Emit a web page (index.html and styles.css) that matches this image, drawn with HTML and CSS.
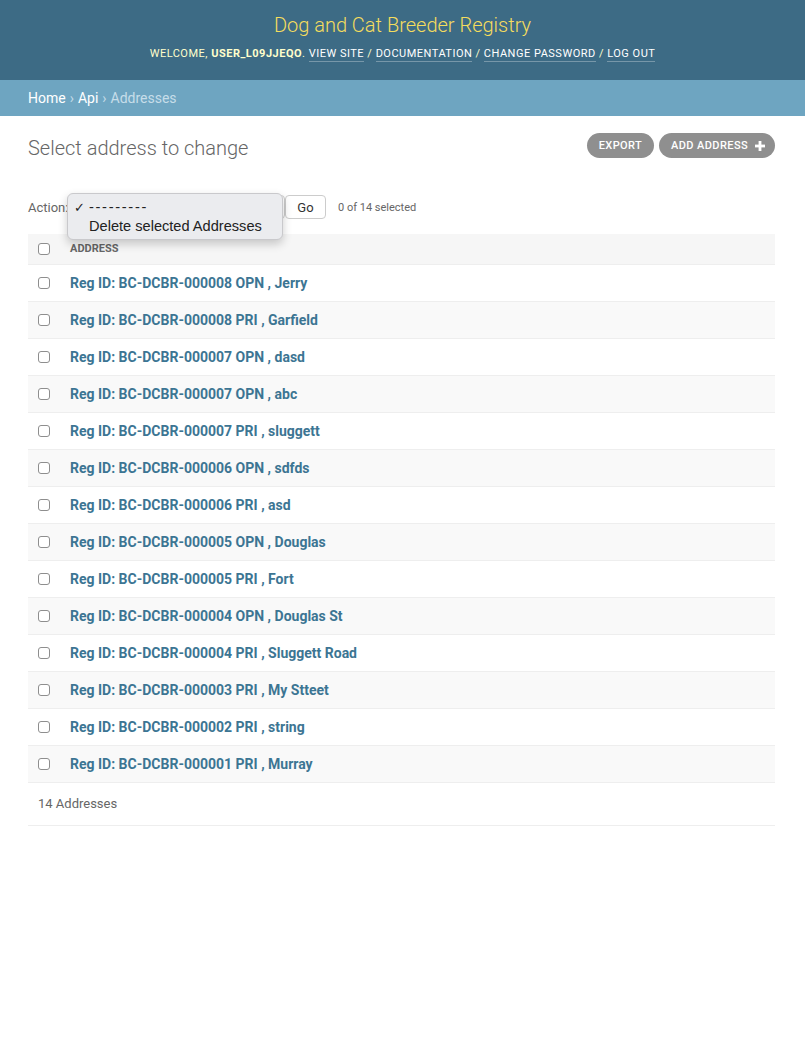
FILE: index.html
```html
<!DOCTYPE html>
<html lang="en">
<head>
<meta charset="utf-8">
<title>Select address to change</title>
<link rel="stylesheet" href="styles.css">
</head>
<body>
<header class="header">
  <h1 class="site-name">Dog and Cat Breeder Registry</h1>
  <div class="user-tools">
    Welcome, <strong>user_l09jjeqo</strong>.
    <a href="#">View site</a> /
    <a href="#">Documentation</a> /
    <a href="#">Change password</a> /
    <a href="#">Log out</a>
  </div>
</header>
<nav class="breadcrumbs">
  <a href="#">Home</a> › <a href="#">Api</a> › <span class="current">Addresses</span>
</nav>
<main class="content">
  <div class="title-row">
    <h1 class="page-title">Select address to change</h1>
    <div class="object-tools">
      <a href="#" class="tool-btn">Export</a>
      <a href="#" class="tool-btn">Add address
        <svg class="plus" width="10" height="10" viewBox="0 0 10 10"><rect x="3.6" y="0" width="2.8" height="10" fill="#fff"/><rect x="0" y="3.6" width="10" height="2.8" fill="#fff"/></svg>
      </a>
    </div>
  </div>
  <div class="actions">
    <span class="action-label">Action:</span>
    <div class="select-wrap">
      <div class="select-box"></div>
      <div class="popup">
        <div class="popup-item"><span class="check">✓</span><span class="dashes">---------</span></div>
        <div class="popup-item">Delete selected Addresses</div>
      </div>
    </div>
    <button class="go-btn">Go</button>
    <span class="counter">0 of 14 selected</span>
  </div>
  <table class="result-list">
    <thead>
      <tr><th class="cb-cell"><input type="checkbox" class="cb"></th><th class="col-head">Address</th></tr>
    </thead>
    <tbody>
      <tr><td class="cb-cell"><input type="checkbox" class="cb"></td><td><a href="#">Reg ID: BC-DCBR-000008 OPN , Jerry</a></td></tr>
      <tr><td class="cb-cell"><input type="checkbox" class="cb"></td><td><a href="#">Reg ID: BC-DCBR-000008 PRI , Garfield</a></td></tr>
      <tr><td class="cb-cell"><input type="checkbox" class="cb"></td><td><a href="#">Reg ID: BC-DCBR-000007 OPN , dasd</a></td></tr>
      <tr><td class="cb-cell"><input type="checkbox" class="cb"></td><td><a href="#">Reg ID: BC-DCBR-000007 OPN , abc</a></td></tr>
      <tr><td class="cb-cell"><input type="checkbox" class="cb"></td><td><a href="#">Reg ID: BC-DCBR-000007 PRI , sluggett</a></td></tr>
      <tr><td class="cb-cell"><input type="checkbox" class="cb"></td><td><a href="#">Reg ID: BC-DCBR-000006 OPN , sdfds</a></td></tr>
      <tr><td class="cb-cell"><input type="checkbox" class="cb"></td><td><a href="#">Reg ID: BC-DCBR-000006 PRI , asd</a></td></tr>
      <tr><td class="cb-cell"><input type="checkbox" class="cb"></td><td><a href="#">Reg ID: BC-DCBR-000005 OPN , Douglas</a></td></tr>
      <tr><td class="cb-cell"><input type="checkbox" class="cb"></td><td><a href="#">Reg ID: BC-DCBR-000005 PRI , Fort</a></td></tr>
      <tr><td class="cb-cell"><input type="checkbox" class="cb"></td><td><a href="#">Reg ID: BC-DCBR-000004 OPN , Douglas St</a></td></tr>
      <tr><td class="cb-cell"><input type="checkbox" class="cb"></td><td><a href="#">Reg ID: BC-DCBR-000004 PRI , Sluggett Road</a></td></tr>
      <tr><td class="cb-cell"><input type="checkbox" class="cb"></td><td><a href="#">Reg ID: BC-DCBR-000003 PRI , My Stteet</a></td></tr>
      <tr><td class="cb-cell"><input type="checkbox" class="cb"></td><td><a href="#">Reg ID: BC-DCBR-000002 PRI , string</a></td></tr>
      <tr><td class="cb-cell"><input type="checkbox" class="cb"></td><td><a href="#">Reg ID: BC-DCBR-000001 PRI , Murray</a></td></tr>
    </tbody>
  </table>
  <p class="paginator">14 Addresses</p>
</main>
</body>
</html>
```

FILE: styles.css
```css
* { box-sizing: border-box; }
html, body { margin: 0; padding: 0; }
body {
  font-family: Roboto, "Liberation Sans", Arial, sans-serif;
  color: #333;
  background: #fff;
  font-size: 14px;
}
a { text-decoration: none; }

.header {
  background: #3d6b85;
  height: 80px;
  display: flex;
  flex-direction: column;
  align-items: center;
  padding-top: 13px;
}
.site-name {
  margin: 0;
  font-size: 20px;
  font-weight: 300;
  line-height: 24px;
  color: #f5dd5d;
}
.user-tools {
  margin-top: 9px;
  font-size: 11px;
  letter-spacing: 0.5px;
  text-transform: uppercase;
  color: #ffffcc;
  line-height: 16px;
}
.user-tools strong { font-weight: 700; }
.user-tools a {
  color: #fff;
  border-bottom: 1px solid rgba(255,255,255,0.3);
  padding-bottom: 1px;
}

.breadcrumbs {
  background: #6ea5c1;
  height: 36px;
  padding: 0 28px;
  display: flex;
  align-items: center;
  gap: 4px;
  color: #c4dce8;
  font-size: 14px;
}
.breadcrumbs a { color: #fff; }
.breadcrumbs .current { color: #c6dde9; }

.content { padding: 17px 30px 0 28px; }
.title-row {
  display: flex;
  justify-content: space-between;
  align-items: flex-start;
}
.page-title {
  margin: 3px 0 0;
  font-size: 20px;
  font-weight: 300;
  line-height: 24px;
  color: #666;
}
.object-tools { display: flex; gap: 5px; }
.tool-btn {
  display: flex;
  align-items: center;
  gap: 7px;
  height: 25px;
  padding: 0 10px 0 12px;
  border-radius: 13px;
  background: #8f8f8f;
  color: #fff;
  font-size: 11px;
  font-weight: 500;
  letter-spacing: 0.4px;
  text-transform: uppercase;
}
.tool-btn:first-child { padding: 0 12px; }

.actions {
  display: flex;
  align-items: center;
  height: 24px;
  margin-top: 35px;
}
.action-label { font-size: 13px; color: #666; width: 42px; }
.select-wrap { position: relative; width: 215px; height: 24px; }
.select-box {
  height: 24px;
  border: 1px solid #ccc;
  border-radius: 4px;
}
.popup {
  position: absolute;
  left: -3px;
  top: -2px;
  width: 216px;
  height: 47px;
  background: #ebecef;
  border: 1px solid #c9c9cc;
  border-radius: 6px;
  box-shadow: 0 4px 10px rgba(0,0,0,0.2);
  padding: 4px 0;
  font-family: "Liberation Sans", Arial, sans-serif;
  font-size: 14.6px;
  color: #222;
}
.popup-item {
  height: 19px;
  line-height: 19px;
  padding-left: 21px;
  position: relative;
}
.dashes { letter-spacing: 1.7px; }
.check { position: absolute; left: 6px; font-size: 13px; font-family: "DejaVu Sans", sans-serif; }
.go-btn {
  margin-left: 0;
  height: 24px;
  width: 41px;
  background: #fff;
  border: 1px solid #ccc;
  border-radius: 4px;
  font-family: Roboto, "Liberation Sans", sans-serif;
  font-size: 13px;
  color: #333;
  padding: 0;
}
.counter { margin-left: 12px; font-size: 11px; color: #666; }

.result-list {
  margin-top: 15px;
  width: 100%;
  border-collapse: collapse;
}
.result-list thead th {
  background: #f6f6f6;
  height: 30px;
  text-align: left;
  border-bottom: 1px solid #eee;
  padding: 0;
}
.col-head {
  font-size: 11px;
  font-weight: 700;
  text-transform: uppercase;
  color: #666;
}
.cb-cell { width: 42px; padding: 0 0 0 10px !important; }
.cb {
  appearance: none;
  -webkit-appearance: none;
  width: 12px;
  height: 12px;
  margin: 0;
  border: 1px solid #8e8e8e;
  border-radius: 3px;
  background: #fff;
  display: block;
}
.result-list tbody td {
  height: 37px;
  border-bottom: 1px solid #eee;
  padding: 0;
  font-size: 14px;
}
.result-list tbody tr:nth-child(even) td { background: #f9f9f9; }
.result-list tbody a { color: #3c7593; font-weight: 700; }

.paginator {
  margin: 0;
  height: 43px;
  line-height: 42px;
  padding-left: 10px;
  border-bottom: 1px solid #eee;
  font-size: 13px;
  color: #666;
}
```
